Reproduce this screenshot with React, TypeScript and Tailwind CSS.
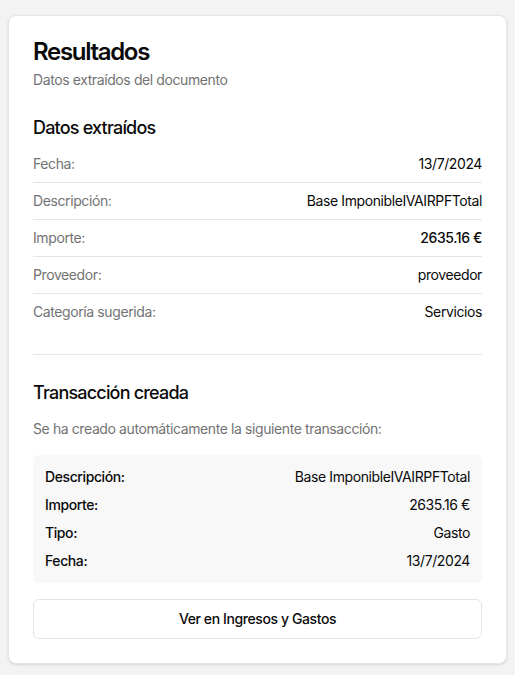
import React from 'react';

const EXTRACTED = [
  { label: 'Fecha:', value: '13/7/2024' },
  { label: 'Descripción:', value: 'Base ImponibleIVAIRPFTotal' },
  { label: 'Importe:', value: '2635.16 €', strong: true },
  { label: 'Proveedor:', value: 'proveedor' },
  { label: 'Categoría sugerida:', value: 'Servicios' },
];

const TRANSACTION = [
  { label: 'Descripción:', value: 'Base ImponibleIVAIRPFTotal' },
  { label: 'Importe:', value: '2635.16 €' },
  { label: 'Tipo:', value: 'Gasto' },
  { label: 'Fecha:', value: '13/7/2024' },
];

export default function App() {
  return (
    <div className="min-h-[675px] bg-[#f3f3f3] pt-[15px] pl-2 font-['Inter',sans-serif] text-[#0a0a0a] tracking-[-0.025em]">
      <div className="w-[499px] rounded-lg border border-[#e5e5e5] bg-white shadow-sm">
        {/* Header */}
        <div className="flex flex-col gap-1.5 p-6">
          <h1 className="text-2xl font-semibold leading-none tracking-[-0.055em]">Resultados</h1>
          <p className="text-sm text-[#737373]">Datos extraídos del documento</p>
        </div>

        <div className="px-6 pb-6">
          {/* Datos extraídos */}
          <h2 className="text-lg font-medium tracking-[-0.045em]">Datos extraídos</h2>
          <div className="mt-1">
            {EXTRACTED.map((row, i) => (
              <div
                key={row.label}
                className={`flex items-center justify-between py-2 text-sm ${
                  i < EXTRACTED.length - 1 ? 'border-b border-[#e5e5e5]' : ''
                }`}
              >
                <span className="text-[#737373]">{row.label}</span>
                <span className={row.strong ? 'font-medium' : ''}>{row.value}</span>
              </div>
            ))}
          </div>

          <div className="my-6 h-px bg-[#e5e5e5]" />

          {/* Transacción creada */}
          <h2 className="text-lg font-medium tracking-[-0.045em]">Transacción creada</h2>
          <p className="mt-3 text-sm text-[#737373]">
            Se ha creado automáticamente la siguiente transacción:
          </p>
          <div className="mt-4 flex flex-col gap-2 rounded-md bg-[#f8f8f8] p-3 text-sm">
            {TRANSACTION.map((row) => (
              <div key={row.label} className="flex items-center justify-between">
                <span className="font-medium">{row.label}</span>
                <span>{row.value}</span>
              </div>
            ))}
          </div>

          <button className="mt-4 flex h-10 w-full items-center justify-center rounded-md border border-[#e5e5e5] bg-white text-sm font-medium">
            Ver en Ingresos y Gastos
          </button>
        </div>
      </div>
    </div>
  );
}
